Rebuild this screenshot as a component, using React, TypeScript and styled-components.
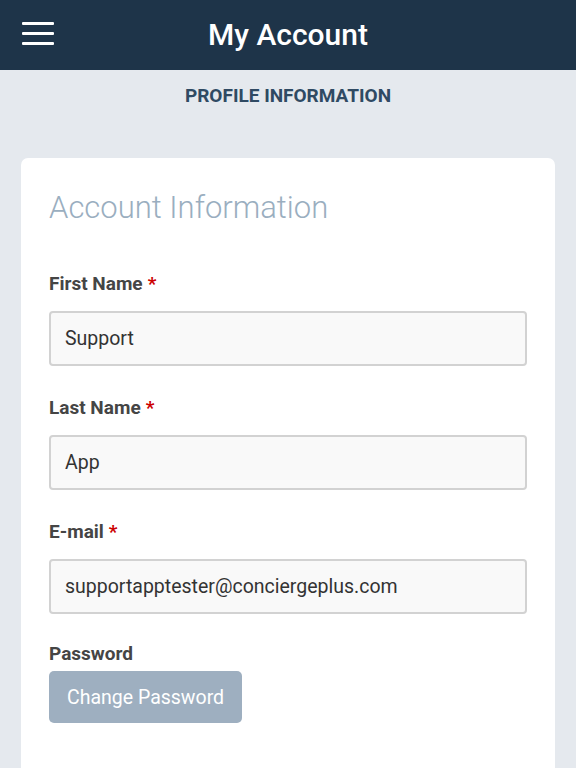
import styled, { createGlobalStyle } from "styled-components";

const GlobalStyle = createGlobalStyle`
  html, body {
    margin: 0;
    padding: 0;
    background: #e5e9ee;
    font-family: Roboto, "Noto Sans", "Liberation Sans", sans-serif;
  }
  * { box-sizing: border-box; }
`;

const Page = styled.div`
  min-height: 768px;
  background: #e5e9ee;
`;

const Header = styled.header`
  height: 70px;
  background: #1e3449;
  display: flex;
  align-items: center;
  justify-content: center;
  position: relative;
`;

const MenuButton = styled.button`
  position: absolute;
  left: 22px;
  top: 22px;
  width: 32px;
  height: 23px;
  padding: 0;
  border: none;
  background: none;
  display: flex;
  flex-direction: column;
  justify-content: space-between;
  cursor: pointer;
`;

const MenuLine = styled.span`
  display: block;
  height: 3px;
  width: 32px;
  background: #ffffff;
  border-radius: 1px;
`;

const Title = styled.h1`
  margin: 0;
  color: #ffffff;
  font-size: 30px;
  font-weight: 500;
  line-height: 36px;
`;

const SubHeader = styled.div`
  padding: 16px 0 52px;
  text-align: center;
  font-size: 19px;
  line-height: 20px;
  font-weight: 700;
  color: #2f4a63;
`;

const Card = styled.section`
  margin: 0 21px;
  background: #ffffff;
  border-radius: 7px;
  padding: 32px 28px 40px;
`;

const CardTitle = styled.h2`
  margin: 0 0 47px;
  font-size: 31px;
  line-height: 36px;
  font-weight: 300;
  color: #9aaebf;
`;

const Field = styled.div<{ $gap?: number }>`
  display: flex;
  flex-direction: column;
  margin-bottom: ${(p) => p.$gap ?? 31}px;
`;

const Label = styled.label<{ $space?: number }>`
  font-size: 19px;
  line-height: 22px;
  font-weight: 700;
  color: #454545;
  margin-bottom: ${(p) => p.$space ?? 16}px;
`;

const Required = styled.span`
  color: #cc0000;
  margin-left: 5px;
`;

const Input = styled.input`
  height: 55px;
  width: 100%;
  border: 2px solid #d2d2d2;
  border-radius: 4px;
  background: #f9f9f9;
  padding: 0 14px;
  font-family: inherit;
  font-size: 19.5px;
  color: #333333;
  outline: none;
`;

const Button = styled.button`
  align-self: flex-start;
  height: 52px;
  padding: 0 18px;
  border: none;
  border-radius: 5px;
  background: #9eafc0;
  color: #ffffff;
  font-family: inherit;
  font-size: 19.5px;
  font-weight: 400;
  cursor: pointer;
`;

const fields = [
  { label: "First Name", value: "Support", gap: 31 },
  { label: "Last Name", value: "App", gap: 31 },
  { label: "E-mail", value: "supportapptester@conciergeplus.com", gap: 29 },
];

export default function App() {
  return (
    <Page>
      <GlobalStyle />
      <Header>
        <MenuButton aria-label="Menu">
          <MenuLine />
          <MenuLine />
          <MenuLine />
        </MenuButton>
        <Title>My Account</Title>
      </Header>
      <SubHeader>PROFILE INFORMATION</SubHeader>
      <Card>
        <CardTitle>Account Information</CardTitle>
        {fields.map((f) => (
          <Field key={f.label} $gap={f.gap}>
            <Label>
              {f.label}
              <Required>*</Required>
            </Label>
            <Input defaultValue={f.value} />
          </Field>
        ))}
        <Field $gap={43}>
          <Label $space={6}>Password</Label>
          <Button>Change Password</Button>
        </Field>
        <Field>
          <Label>Phone Number</Label>
          <Input defaultValue="" />
        </Field>
      </Card>
    </Page>
  );
}
